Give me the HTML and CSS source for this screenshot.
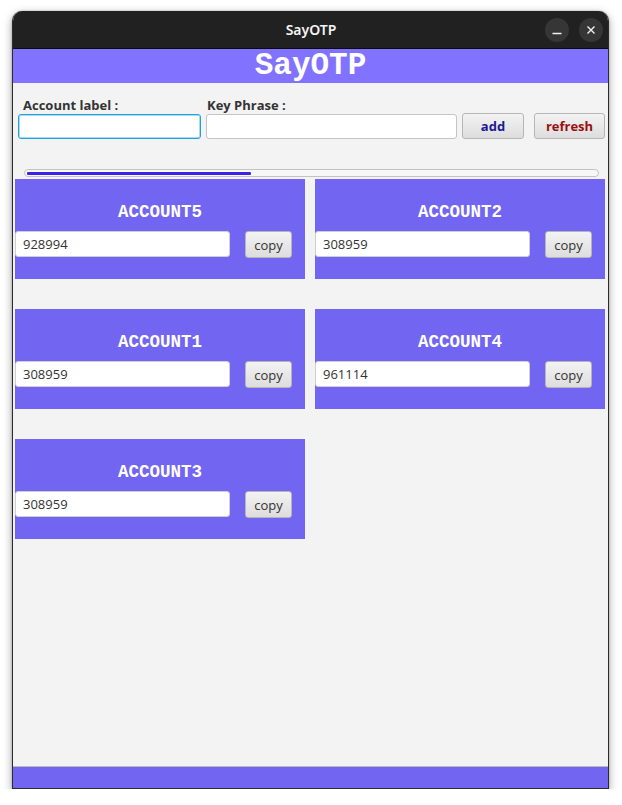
FILE: index.html
```html
<!DOCTYPE html>
<html>
<head>
<meta charset="utf-8">
<title>SayOTP</title>
<link rel="stylesheet" href="styles.css">
</head>
<body>
<div class="window">
  <div class="titlebar">
    <span class="win-title">SayOTP</span>
    <div class="win-controls">
      <span class="win-btn"><svg width="24" height="24" viewBox="0 0 24 24"><line x1="7.5" y1="15.5" x2="16.5" y2="15.5" stroke="#f2f2f2" stroke-width="1.4"/></svg></span>
      <span class="win-btn"><svg width="24" height="24" viewBox="0 0 24 24"><path d="M8.5 8.5 L15.5 15.5 M15.5 8.5 L8.5 15.5" stroke="#f2f2f2" stroke-width="1.4"/></svg></span>
    </div>
  </div>
  <div class="app-header">SayOTP</div>
  <div class="form">
    <div class="field field-label">
      <label class="lbl lbl-first">Account label :</label>
      <input class="txt txt-focus" type="text">
    </div>
    <div class="field field-key">
      <label class="lbl">Key Phrase :</label>
      <input class="txt" type="text">
    </div>
    <button class="btn btn-add">add</button>
    <button class="btn btn-refresh">refresh</button>
  </div>
  <div class="progress"><div class="progress-fill"></div></div>
  <div class="cards">
    <div class="card">
      <div class="card-title">ACCOUNT5</div>
      <div class="card-row"><input class="code" type="text" value="928994"><button class="btn btn-copy">copy</button></div>
    </div>
    <div class="card">
      <div class="card-title">ACCOUNT2</div>
      <div class="card-row"><input class="code" type="text" value="308959"><button class="btn btn-copy">copy</button></div>
    </div>
    <div class="card">
      <div class="card-title">ACCOUNT1</div>
      <div class="card-row"><input class="code" type="text" value="308959"><button class="btn btn-copy">copy</button></div>
    </div>
    <div class="card">
      <div class="card-title">ACCOUNT4</div>
      <div class="card-row"><input class="code" type="text" value="961114"><button class="btn btn-copy">copy</button></div>
    </div>
    <div class="card">
      <div class="card-title">ACCOUNT3</div>
      <div class="card-row"><input class="code" type="text" value="308959"><button class="btn btn-copy">copy</button></div>
    </div>
  </div>
  <div class="footer"></div>
</div>
</body>
</html>
```
FILE: styles.css
```css
* { box-sizing: border-box; }
html, body { margin: 0; padding: 0; background: #ffffff; }
body { font-family: "Open Sans", "Noto Sans", sans-serif; }

.window {
  margin: 11px 0 0 12px;
  width: 597px;
  height: 778px;
  border: 1px solid #2c2c2c;
  border-top: none;
  border-radius: 10px 10px 0 0;
  background: #f3f3f3;
  display: flex;
  flex-direction: column;
  overflow: hidden;
  box-shadow: 0 3px 10px rgba(0,0,0,0.35), 0 0 2px rgba(0,0,0,0.3);
}

.titlebar {
  height: 38px;
  background: #212121;
  border-bottom: 1px solid #0c0c0c;
  display: flex;
  align-items: center;
  justify-content: center;
  position: relative;
  flex: none;
}
.win-title {
  color: #f4f4f4;
  font-family: "Noto Sans", "Open Sans", sans-serif;
  font-weight: 600;
  font-size: 14px;
  margin-left: 1px;
}
.win-controls {
  position: absolute;
  right: 5px;
  top: 7px;
  display: flex;
  gap: 10px;
}
.win-btn {
  width: 24px;
  height: 24px;
  border-radius: 50%;
  background: #363636;
  display: block;
}
.win-btn svg { display: block; }

.app-header {
  height: 34px;
  background: #8173ff;
  color: #ffffff;
  font-family: "Liberation Mono", "Courier New", monospace;
  font-weight: bold;
  font-size: 31px;
  line-height: 34px;
  text-align: center;
  flex: none;
}

.form {
  display: flex;
  align-items: flex-end;
  padding: 13px 0 0 5px;
  flex: none;
}
.field { display: flex; flex-direction: column; }
.field-label { width: 183px; }
.field-key { width: 251px; margin-left: 5px; }
.lbl {
  font-size: 13px;
  font-weight: 700;
  color: #333333;
  line-height: 18px;
  padding-left: 1px;
}
.lbl-first { padding-left: 5px; }
.txt {
  height: 25px;
  border: 1px solid #c4c4c4;
  border-radius: 3px;
  background: #ffffff;
  font-family: inherit;
  font-size: 13px;
  outline: none;
  padding: 0 7px;
}
.txt-focus {
  border: 1px solid #1fa2d9;
  box-shadow: inset 0 0 0 1px #a9dcf0;
}

.btn {
  font-family: "Open Sans", "Noto Sans", sans-serif;
  font-size: 13px;
  border: 1px solid #b6b6b6;
  border-radius: 3px;
  background: linear-gradient(#f3f3f3, #dddddd);
  padding: 0;
  cursor: pointer;
}
.btn-add {
  width: 62px;
  height: 26px;
  margin-left: 5px;
  font-weight: 700;
  color: #1d1895;
}
.btn-refresh {
  width: 71px;
  height: 26px;
  margin-left: 10px;
  font-weight: 700;
  color: #9b0f0f;
}

.progress {
  margin: 30px 0 0 11px;
  width: 575px;
  height: 8px;
  border: 1px solid #c3c3c3;
  border-radius: 4px;
  background: #f7f7f7;
  padding: 1.5px 2px;
  flex: none;
}
.progress-fill {
  width: 224px;
  height: 3px;
  background: #3d22e6;
  border-radius: 1px;
}

.cards {
  flex: 1;
  margin-top: 2px;
  padding-left: 2px;
  display: grid;
  grid-template-columns: 290px 290px;
  grid-auto-rows: 100px;
  column-gap: 10px;
  row-gap: 30px;
  align-content: start;
}
.card {
  background: #7265f2;
  display: flex;
  flex-direction: column;
  padding-top: 24px;
}
.card-title {
  color: #ffffff;
  font-family: "Liberation Mono", "Courier New", monospace;
  font-weight: bold;
  font-size: 17.5px;
  line-height: 18px;
  text-align: center;
}
.card-row {
  display: flex;
  align-items: flex-start;
  margin-top: 10px;
}
.code {
  width: 215px;
  height: 26px;
  border: 1px solid #cfcfcf;
  border-radius: 3px;
  background: #ffffff;
  font-family: inherit;
  font-size: 13px;
  color: #333333;
  padding: 0 7px;
  outline: none;
}
.btn-copy {
  width: 47px;
  height: 27px;
  margin-left: 15px;
  color: #333333;
}

.footer {
  height: 22px;
  border-top: 1px solid #b9b9b9;
  background: #7265f2;
  flex: none;
}
```
